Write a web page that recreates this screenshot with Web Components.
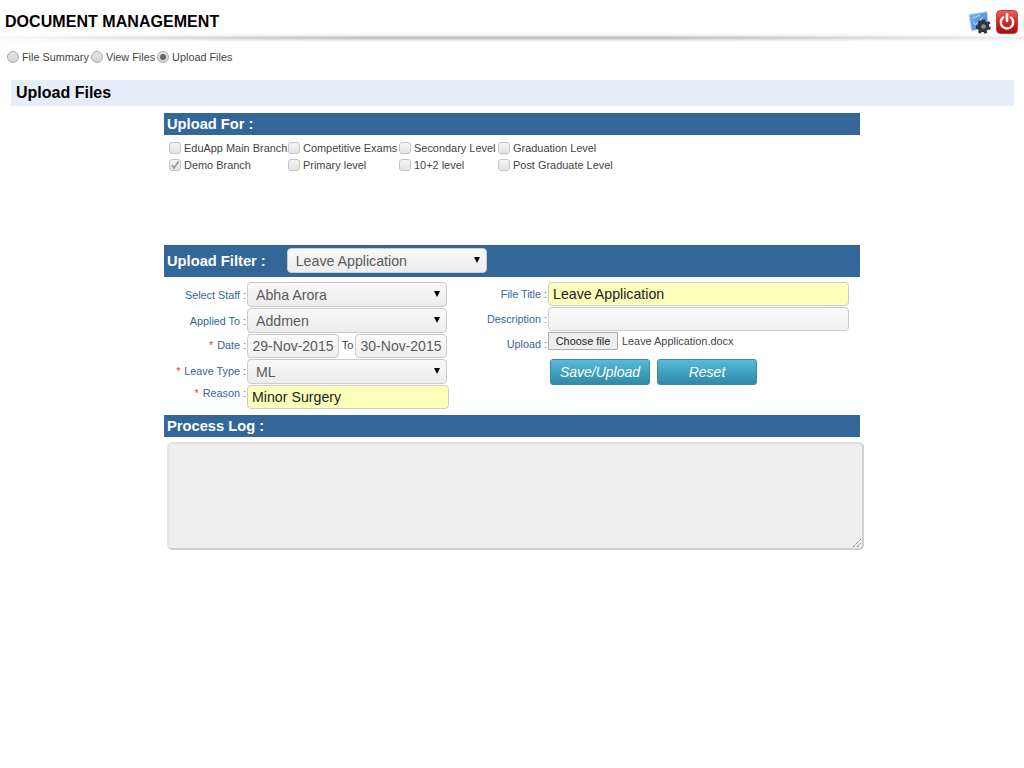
<!DOCTYPE html>
<html>
<head>
<meta charset="utf-8">
<title>Document Management</title>
<style>
  html, body { margin: 0; background: #fff; font-family: "Liberation Sans", Arial, sans-serif; }
</style>
</head>
<body>
<app-header>DOCUMENT MANAGEMENT</app-header>
<radio-tabs></radio-tabs>
<section-title>Upload Files</section-title>
<upload-panel></upload-panel>

<script>
// Page header
class AppHeader extends HTMLElement {
  constructor(){
    super();
    this.attachShadow({mode: 'open'});
    this.shadowRoot.innerHTML = `
    <style>
      :host { display: block; }
      .top { display: flex; justify-content: space-between; height: 33px; padding: 0 6px 0 5px; }
      h1 { margin: 13px 0 0; font-size: 16px; line-height: 18px; font-weight: bold; color: #000; letter-spacing: .05px; }
      .icons { display: flex; align-items: flex-start; gap: 4px; padding-top: 10px; z-index: 1; }
      .rule { height: 9px; background: linear-gradient(90deg, rgba(255,255,255,.9), rgba(255,255,255,0) 35%, rgba(255,255,255,0) 65%, rgba(255,255,255,.75)), linear-gradient(#fff, #f1f1f1 25%, #d8d8d8 40%, #bcbcbc 50%, #c6c6c6 60%, #e8e8e8 80%, #fff); }
    </style>
    <div class="top">
      <h1><slot></slot></h1>
      <div class="icons">
        <svg width="24" height="25" viewBox="0 0 24 25">
          <defs><linearGradient id="b" x1="0" y1="0" x2="1" y2="1"><stop offset="0" stop-color="#7fb6ee"/><stop offset="1" stop-color="#3f82d0"/></linearGradient></defs>
          <path d="M.8 4.5 L19.2 1.5 L20.5 17 L3.5 21 Z" fill="url(#b)" stroke="#cfdcee"/>
          <path d="M5 8 L12 5 M8 14 L15 7 M5 12 l3 3" stroke="#bcd9f6" stroke-width="1" fill="none"/>
          <g transform="translate(15.5 16.5)">
            <path d="M-1.6 -7 H1.6 L2 -5 L3.8 -4.3 L5.4 -5.4 L7 -3.2 L5.4 -2 L5.7 0 L7.4 1 L6.4 3.4 L4.6 3 L3.2 4.6 L3.6 6.6 L1 7.2 L0 5.6 L-1.8 5.6 L-2.8 7.2 L-5.4 6 L-4.8 4 L-6 2.6 L-7.6 2.4 L-7.6 -.8 L-5.8 -1.4 L-5 -3.2 L-6 -4.8 L-3.8 -6.2 L-2.4 -5 Z" fill="#33373b"/>
            <circle r="2.3" fill="#8d9399"/>
          </g>
        </svg>
        <svg width="22" height="24" viewBox="0 0 22 24">
          <defs><linearGradient id="r" x1="0" y1="0" x2="0" y2="1"><stop offset="0" stop-color="#f0605a"/><stop offset=".45" stop-color="#da2a26"/><stop offset="1" stop-color="#a30d0d"/></linearGradient></defs>
          <rect x=".5" y=".5" width="21" height="23" rx="4" fill="url(#r)" stroke="#c4403c"/>
          <path d="M7.2 7.4 A6.2 6.2 0 1 0 14.8 7.4" fill="none" stroke="#fff" stroke-width="2.4" stroke-linecap="round"/>
          <path d="M11 4.4 V11" stroke="#fff" stroke-width="2.6" stroke-linecap="round"/>
        </svg>
      </div>
    </div>
    <div class="rule"></div>
    `;
  }
}
customElements.define('app-header', AppHeader);

// File Summary / View Files / Upload Files
class RadioTabs extends HTMLElement {
  constructor(){
    super();
    this.attachShadow({mode: 'open'});
    const tabs = [['File Summary', false], ['View Files', false], ['Upload Files', true]];
    this.shadowRoot.innerHTML = `
    <style>
      :host { display: flex; gap: 2px; margin: 8px 0 0 7px; height: 14px; font-size: 10.85px; line-height: 14px; color: #444; }
      label { display: flex; align-items: center; gap: 3px; }
      i { width: 10px; height: 10px; border: 1px solid #aaa; border-radius: 50%; background: linear-gradient(#e6e6e6, #d2d2d2); display: flex; align-items: center; justify-content: center; }
      i.on::after { content: ""; width: 6px; height: 6px; border-radius: 50%; background: #666; }
    </style>
    ${tabs.map(t => `<label><i class="${t[1] ? 'on' : ''}"></i>${t[0]}</label>`).join('')}
    `;
  }
}
customElements.define('radio-tabs', RadioTabs);

class SectionTitle extends HTMLElement {
  constructor(){
    super();
    this.attachShadow({mode: 'open'});
    this.shadowRoot.innerHTML = `
    <style>
      :host { display: block; margin: 16px 10px 0 11px; padding-left: 5px; height: 26px; line-height: 25px; background: #e6ecf8; color: #000; font-size: 16px; font-weight: bold; }
    </style>
    <slot></slot>
    `;
  }
}
customElements.define('section-title', SectionTitle);

// Blue bar with a heading, and room for a control on its right
class PanelBar extends HTMLElement {
  constructor(){
    super();
    this.attachShadow({mode: 'open'});
    this.shadowRoot.innerHTML = `
    <style>
      :host { display: flex; align-items: center; padding-left: 3px; min-height: 22px; background: #336699; color: #fff; font-size: 14.7px; font-weight: bold; }
      span { margin-bottom: 1px; }
      ::slotted(form-box) { font-weight: normal; }
    </style>
    <span></span><slot></slot>
    `;
    this.shadowRoot.querySelector('span').textContent = this.getAttribute('label');
  }
}
customElements.define('panel-bar', PanelBar);

class CheckItem extends HTMLElement {
  constructor(){
    super();
    this.attachShadow({mode: 'open'});
    this.shadowRoot.innerHTML = `
    <style>
      :host { display: flex; align-items: center; gap: 3px; height: 17px; font-size: 10.95px; color: #444; white-space: nowrap; }
      i { flex: none; width: 10px; height: 10px; border: 1px solid #c4c4c4; border-radius: 3px; background: linear-gradient(#f4f4f4, #e4e4e4); display: flex; }
      svg { display: none; }
      :host([checked]) svg { display: block; }
    </style>
    <i><svg width="10" height="10" viewBox="0 0 10 10"><path d="M2 5 L4 8 L8.5 1.5" fill="none" stroke="#999" stroke-width="1.8"/></svg></i>
    <span><slot></slot></span>
    `;
  }
}
customElements.define('check-item', CheckItem);

// Rounded input-looking box. kind: select | yellow | plain
class FormBox extends HTMLElement {
  constructor(){
    super();
    this.attachShadow({mode: 'open'});
    this.shadowRoot.innerHTML = `
    <style>
      :host { display: flex; align-items: center; justify-content: space-between; box-sizing: border-box; padding: 0 4px 0 8px; border: 1px solid #ccc; border-radius: 4px; background: linear-gradient(#f9f9f9, #ececec); font-size: 14.2px; color: #5a5a5a; white-space: nowrap; }
      :host([kind=yellow]) { background: #fbffb9; color: #222; padding-left: 4px; }
      :host([kind=plain]) { padding: 0 3px; justify-content: center; background: linear-gradient(#fafafa, #f0f0f0); font-size: 14px; }
      b { display: none; width: 0; height: 0; margin-right: 2px; border: 3.5px solid transparent; border-top: 6px solid #000; border-bottom: 0; margin-top: -2px; }
      :host([kind=select]) b { display: block; }
    </style>
    <span><slot></slot></span><b></b>
    `;
  }
}
customElements.define('form-box', FormBox);

// Label + controls on one line
class FieldRow extends HTMLElement {
  constructor(){
    super();
    this.attachShadow({mode: 'open'});
    this.shadowRoot.innerHTML = `
    <style>
      :host { display: flex; align-items: flex-start; font-size: 10.8px; color: #336699; }
      label { flex: none; width: var(--label-width); box-sizing: border-box; padding-right: 1px; text-align: right; white-space: nowrap; line-height: 13px; margin-top: var(--label-top, 6px); }
      em { font-style: normal; color: #e33; margin-right: 1px; }
      .ctl { display: flex; align-items: flex-start; flex: none; }
    </style>
    <label></label><div class="ctl"><slot></slot></div>
    `;
    const label = this.shadowRoot.querySelector('label');
    label.innerHTML = (this.hasAttribute('req') ? '<em>*</em> ' : '') + this.getAttribute('label') + ' :';
  }
}
customElements.define('field-row', FieldRow);

class BlueButton extends HTMLElement {
  constructor(){
    super();
    this.attachShadow({mode: 'open'});
    this.shadowRoot.innerHTML = `
    <style>
      :host { display: flex; align-items: center; justify-content: center; box-sizing: border-box; width: 100px; height: 26px; border-radius: 3px; border: 1px solid #3a8aa8; background: linear-gradient(#5cbad9, #3d9cbd 60%, #3389a8); color: #fff; font-size: 14px; font-style: italic; }
    </style>
    <slot></slot>
    `;
  }
}
customElements.define('blue-button', BlueButton);

class UploadPanel extends HTMLElement {
  constructor(){
    super();
    this.attachShadow({mode: 'open'});
    this.shadowRoot.innerHTML = `
    <style>
      :host { display: block; width: 696px; margin: 7px 0 0 164px; }
      .checks { display: grid; grid-template-columns: 119px 111px 99px auto; margin: 4px 0 0 5px; height: 106px; align-content: start; }
      .form { display: flex; margin-top: 5px; height: 133px; }
      .left { width: 301px; --label-width: 83px; display: flex; flex-direction: column; }
      .right { --label-width: 83px; display: flex; flex-direction: column; --label-top: 6px; }
      .to { box-sizing: border-box; padding-left: 1px; font-size: 11px; color: #444; width: 16px; text-align: center; line-height: 22px; }
      .file { display: flex; align-items: center; font-size: 10.9px; color: #444; height: 18px; white-space: nowrap; }
      .choose { box-sizing: border-box; height: 18px; width: 70px; margin-right: 4px; border: 1px solid #aaa; border-radius: 1px; background: #eee; color: #222; text-align: center; line-height: 16px; }
      .actions { display: flex; gap: 7px; margin: 8px 0 0 85px; }
      .log { box-sizing: border-box; width: 697px; height: 108px; margin: 5px 0 0 3px; border: 2px solid; border-color: #e0e0e0 #cfcfcf #cfcfcf #e4e4e4; border-radius: 5px; background: #eee; position: relative; }
      .log svg { position: absolute; right: 0; bottom: 0; }
    </style>
    <panel-bar label="Upload For :"></panel-bar>
    <div class="checks">
      <check-item>EduApp Main Branch</check-item>
      <check-item>Competitive Exams</check-item>
      <check-item>Secondary Level</check-item>
      <check-item>Graduation Level</check-item>
      <check-item checked>Demo Branch</check-item>
      <check-item>Primary level</check-item>
      <check-item>10+2 level</check-item>
      <check-item>Post Graduate Level</check-item>
    </div>
    <panel-bar label="Upload Filter :" style="height:32px">
      <form-box kind="select" style="width:200px;height:25px;margin:0 0 1px 21px">Leave Application</form-box>
    </panel-bar>
    <div class="form">
      <div class="left">
        <field-row label="Select Staff" style="--label-top:7px"><form-box kind="select" style="width:200px;height:25px;margin-bottom:1px">Abha Arora</form-box></field-row>
        <field-row label="Applied To" style="--label-top:7px"><form-box kind="select" style="width:200px;height:25px;margin-bottom:1px">Addmen</form-box></field-row>
        <field-row label="Date" req style="--label-top:5px">
          <form-box kind="plain" style="width:92px;height:24px">29-Nov-2015</form-box>
          <span class="to">To</span>
          <form-box kind="plain" style="width:92px;height:24px">30-Nov-2015</form-box>
        </field-row>
        <field-row label="Leave Type" req style="margin-top:1px"><form-box kind="select" style="width:200px;height:25px;margin-bottom:1px">ML</form-box></field-row>
        <field-row label="Reason" req style="--label-top:2px"><form-box kind="yellow" style="width:202px;height:24px">Minor Surgery</form-box></field-row>
      </div>
      <div class="right">
        <field-row label="File Title"><form-box kind="yellow" style="width:301px;height:24px;margin-bottom:1px">Leave Application</form-box></field-row>
        <field-row label="Description"><form-box kind="plain" style="width:301px;height:24px;margin-bottom:1px"></form-box></field-row>
        <field-row label="Upload">
          <div class="file"><span class="choose">Choose file</span>Leave Application.docx</div>
        </field-row>
        <div class="actions"><blue-button>Save/Upload</blue-button><blue-button>Reset</blue-button></div>
      </div>
    </div>
    <panel-bar label="Process Log :"></panel-bar>
    <div class="log">
      <svg width="10" height="10" viewBox="0 0 10 10"><path d="M1 9 L9 1 M5 9 L9 5" stroke="#444" stroke-width="1" stroke-dasharray="1 1"/></svg>
    </div>
    `;
  }
}
customElements.define('upload-panel', UploadPanel);
</script>
</body>
</html>
